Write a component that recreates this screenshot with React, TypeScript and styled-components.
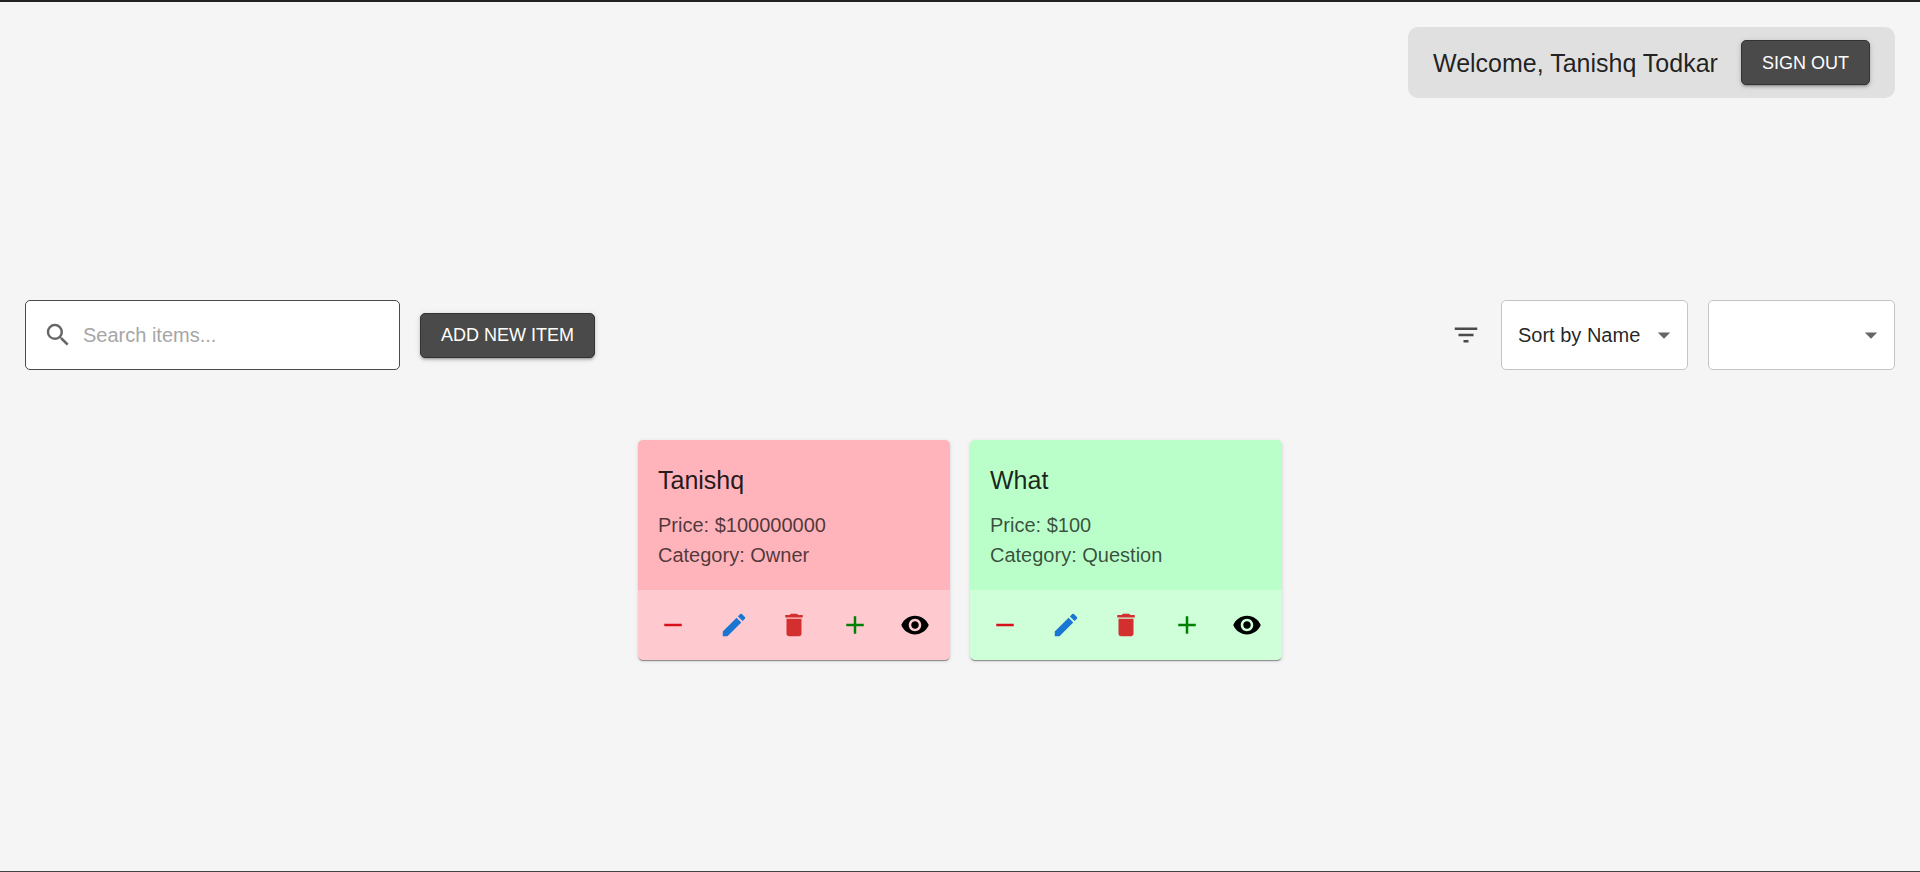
import React from "react";
import styled, { createGlobalStyle } from "styled-components";
import {
  MdAdd,
  MdArrowDropDown,
  MdDelete,
  MdEdit,
  MdFilterList,
  MdRemove,
  MdSearch,
  MdVisibility,
} from "react-icons/md";

const GlobalStyle = createGlobalStyle`
  *, *::before, *::after { box-sizing: border-box; }
  body {
    margin: 0;
    background: #f5f5f5;
    color: rgba(0, 0, 0, 0.87);
    font-family: "Liberation Sans", Arial, sans-serif;
    font-size: 20px;
    line-height: 30px;
  }
  button, input, select { font: inherit; color: inherit; }
`;

const Page = styled.div`
  display: flex;
  flex-direction: column;
  min-height: 100vh;
  padding: 25px;
  border-top: 2px solid #222;
  border-bottom: 1px solid #444;
`;

const Header = styled.header`
  display: flex;
  justify-content: flex-end;
  margin-bottom: 202px;
`;

const UserPanel = styled.div`
  display: flex;
  align-items: center;
  justify-content: space-between;
  gap: 18px;
  min-width: 487px;
  padding: 13px 25px;
  border-radius: 10px;
  background: #e0e0e0;
`;

const Heading = styled.h2`
  margin: 0;
  font-size: 25px;
  font-weight: 400;
  line-height: 40px;
`;

const Button = styled.button`
  height: 45px;
  padding: 0 20px;
  border: 1px solid #333;
  border-radius: 5px;
  background: #4a4a4a;
  color: #fff;
  font-size: 18px;
  white-space: nowrap;
  text-transform: uppercase;
  cursor: pointer;
  box-shadow: 0 3px 2px -2px rgba(0, 0, 0, 0.2), 0 2px 3px rgba(0, 0, 0, 0.14),
    0 1px 6px rgba(0, 0, 0, 0.12);
`;

const Toolbar = styled.section`
  display: flex;
  align-items: center;
  justify-content: space-between;
  gap: 20px;
  margin-bottom: 70px;
`;

const ToolGroup = styled.div`
  display: flex;
  align-items: center;
  gap: 20px;
`;

const SearchField = styled.label`
  display: flex;
  align-items: center;
  gap: 10px;
  width: 375px;
  height: 70px;
  padding: 0 17px;
  border: 1px solid #4a4a4a;
  border-radius: 5px;
  background: #fff;

  svg { flex: none; color: rgba(0, 0, 0, 0.6); }
`;

const SearchInput = styled.input`
  flex: 1;
  min-width: 0;
  padding: 0;
  border: 0;
  outline: 0;
  background: transparent;

  &::placeholder { color: #a6a6a6; opacity: 1; }
`;

const SelectField = styled.div`
  display: grid;
  align-items: center;
  width: 187px;

  > * { grid-area: 1 / 1; }
  svg {
    justify-self: end;
    margin-right: 9px;
    color: rgba(0, 0, 0, 0.6);
    pointer-events: none;
  }
`;

const Select = styled.select`
  appearance: none;
  width: 100%;
  height: 70px;
  padding: 0 40px 0 16px;
  border: 1px solid #c4c4c4;
  border-radius: 5px;
  background: #fff;
`;

const FilterIcon = styled(MdFilterList)`
  color: #4a4a4a;
`;

const Cards = styled.main`
  display: flex;
  flex-wrap: wrap;
  justify-content: center;
  gap: 20px;
`;

const Card = styled.article<{ $color: string }>`
  width: 312px;
  overflow: hidden;
  border-radius: 5px;
  background: ${(p) => p.$color};
  box-shadow: 0 2px 1px -1px rgba(0, 0, 0, 0.3), 0 1px 1px rgba(0, 0, 0, 0.14),
    0 1px 4px rgba(0, 0, 0, 0.12);
`;

const CardContent = styled.div`
  display: flex;
  flex-direction: column;
  padding: 20px;
`;

const CardTitle = styled(Heading)`
  margin-bottom: 10px;
`;

const Detail = styled.p`
  margin: 0;
  color: rgba(0, 0, 0, 0.7);
`;

const CardActions = styled.div`
  display: flex;
  justify-content: space-between;
  padding: 10px;
  background: rgba(255, 255, 255, 0.3);
`;

const IconButton = styled.button<{ $color: string }>`
  display: flex;
  padding: 10px;
  border: 0;
  border-radius: 50%;
  background: transparent;
  color: ${(p) => p.$color};
  cursor: pointer;
`;

const items = [
  { name: "Tanishq", price: 100000000, category: "Owner", color: "#ffb3ba" },
  { name: "What", price: 100, category: "Question", color: "#baffc9" },
];

const actions = [
  { label: "Decrease", Icon: MdRemove, color: "#d8101c" },
  { label: "Edit", Icon: MdEdit, color: "#1976d2" },
  { label: "Delete", Icon: MdDelete, color: "#d32f2f" },
  { label: "Increase", Icon: MdAdd, color: "#008000" },
  { label: "View", Icon: MdVisibility, color: "#000" },
];

export default function App() {
  return (
    <>
      <GlobalStyle />
      <Page>
        <Header>
          <UserPanel>
            <Heading>Welcome, Tanishq Todkar</Heading>
            <Button type="button">Sign out</Button>
          </UserPanel>
        </Header>
        <Toolbar>
          <ToolGroup>
            <SearchField>
              <MdSearch size={30} />
              <SearchInput type="text" placeholder="Search items..." aria-label="Search items" />
            </SearchField>
            <Button type="button">Add new item</Button>
          </ToolGroup>
          <ToolGroup>
            <FilterIcon size={30} />
            <SelectField>
              <Select aria-label="Sort" defaultValue="name">
                <option value="name">Sort by Name</option>
              </Select>
              <MdArrowDropDown size={30} />
            </SelectField>
            <SelectField>
              <Select aria-label="Category" defaultValue="">
                <option value="" />
              </Select>
              <MdArrowDropDown size={30} />
            </SelectField>
          </ToolGroup>
        </Toolbar>
        <Cards>
          {items.map((item) => (
            <Card key={item.name} $color={item.color}>
              <CardContent>
                <CardTitle>{item.name}</CardTitle>
                <Detail>Price: ${item.price}</Detail>
                <Detail>Category: {item.category}</Detail>
              </CardContent>
              <CardActions>
                {actions.map(({ label, Icon, color }) => (
                  <IconButton key={label} type="button" aria-label={label} $color={color}>
                    <Icon size={30} />
                  </IconButton>
                ))}
              </CardActions>
            </Card>
          ))}
        </Cards>
      </Page>
    </>
  );
}
